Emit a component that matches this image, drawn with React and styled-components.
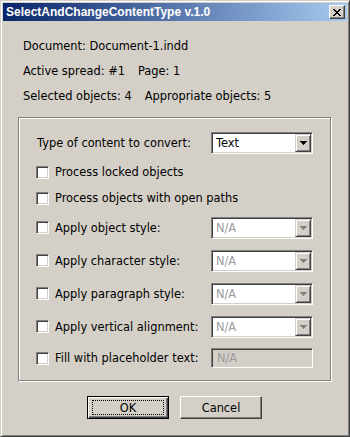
import React from 'react';
import styled, { createGlobalStyle, css } from 'styled-components';

const GlobalStyle = createGlobalStyle`
  html, body { margin: 0; padding: 0; background: #D4D0C8; }
  body {
    font-family: "DejaVu Sans", Verdana, sans-serif;
    font-size: 11.4px;
    color: #000;
  }
`;

const Window = styled.div`
  box-sizing: border-box;
  width: 350px;
  height: 437px;
  display: flex;
  flex-direction: column;
  background: #D4D0C8;
  border: 1px solid;
  border-color: #D4D0C8 #404040 #404040 #D4D0C8;
  box-shadow: inset 1px 1px #fff, inset -1px -1px #808080;
  padding: 2px;
`;

const TitleBar = styled.div`
  height: 18px;
  flex: none;
  display: flex;
  align-items: center;
  justify-content: space-between;
  padding: 0 2px 0 3px;
  background: linear-gradient(to right, #0A246A, #A6CAF0);
`;

const Title = styled.span`
  font-family: "Liberation Sans", Arial, sans-serif;
  font-weight: bold;
  font-size: 12px;
  line-height: 18px;
  color: #fff;
  white-space: nowrap;
`;

const CloseButton = styled.div`
  box-sizing: border-box;
  width: 16px;
  height: 14px;
  display: flex;
  align-items: center;
  justify-content: center;
  background: #D4D0C8;
  border: 1px solid;
  border-color: #fff #404040 #404040 #fff;
  box-shadow: inset -1px -1px #808080;
`;

const Body = styled.div`
  flex: 1;
  display: flex;
  flex-direction: column;
  padding: 18px 16px 0 15px;
`;

const Info = styled.div`
  display: flex;
  flex-direction: column;
  gap: 11px;
  padding-left: 5px;
`;

const InfoLine = styled.div`
  display: flex;
  gap: 13px;
  height: 14px;
  line-height: 14px;
  white-space: nowrap;
`;

const Group = styled.div`
  margin-top: 14px;
  border: 1px solid #808080;
  box-shadow: inset 1px 1px #fff, 1px 1px #fff;
  padding: 13px 17px 12px 17px;
  display: flex;
  flex-direction: column;
  gap: 10px;
`;

const Row = styled.div`
  display: flex;
  align-items: center;
  justify-content: space-between;
  height: ${p => p.$h}px;
`;

const PlainLabel = styled.span`
  padding-left: 1px;
  white-space: nowrap;
`;

const CheckLabel = styled.label`
  display: flex;
  align-items: center;
  gap: 6px;
  white-space: nowrap;
`;

const CheckBox = styled.span`
  box-sizing: border-box;
  width: 13px;
  height: 13px;
  flex: none;
  background: #fff;
  border: 1px solid;
  border-color: #808080 #fff #fff #808080;
  box-shadow: inset 1px 1px #404040, inset -1px -1px #D4D0C8;
`;

const sunken = css`
  box-sizing: border-box;
  border: 1px solid;
  border-color: #808080 #fff #fff #808080;
  box-shadow: inset 1px 1px #404040, inset -1px -1px #D4D0C8;
  padding: 1px;
`;

const Combo = styled.div`
  ${sunken}
  width: 102px;
  height: 22px;
  display: flex;
  background: #fff;
`;

const ComboText = styled.span`
  flex: 1;
  padding-left: 3px;
  line-height: 18px;
  color: ${p => (p.$disabled ? '#9a9a9a' : '#000')};
`;

const ComboButton = styled.span`
  box-sizing: border-box;
  width: 16px;
  height: 18px;
  flex: none;
  display: flex;
  align-items: center;
  justify-content: center;
  background: #D4D0C8;
  border: 1px solid;
  border-color: #D4D0C8 #404040 #404040 #D4D0C8;
  box-shadow: inset 1px 1px #fff, inset -1px -1px #808080;
`;

const TextField = styled.div`
  ${sunken}
  width: 102px;
  height: 20px;
  background: #D4D0C8;
  padding-left: 5px;
  line-height: 16px;
  color: #9a9a9a;
`;

const ButtonRow = styled.div`
  margin-top: 15px;
  display: flex;
  justify-content: center;
  gap: 11px;
`;

const Button = styled.button`
  position: relative;
  box-sizing: border-box;
  width: 82px;
  height: 23px;
  padding: 0;
  font-family: inherit;
  font-size: inherit;
  color: #000;
  background: #D4D0C8;
  border: 1px solid;
  border-color: #fff #404040 #404040 #fff;
  box-shadow: inset -1px -1px #808080;
  ${p =>
    p.$default &&
    css`
      border-color: #000;
      box-shadow: inset 1px 1px #fff, inset -1px -1px #404040, inset -2px -2px #808080;
      &::after {
        content: '';
        position: absolute;
        inset: 3px 4px 3px 4px;
        border: 1px dotted #000;
      }
    `}
`;

const CloseGlyph = () => (
  <svg width="8" height="7" viewBox="0 0 8 7" shapeRendering="crispEdges">
    <path
      fill="#000"
      d="M0 0h2v1H0zM6 0h2v1H6zM1 1h2v1H1zM5 1h2v1H5zM2 2h4v1H2zM3 3h2v1H3zM2 4h4v1H2zM1 5h2v1H1zM5 5h2v1H5zM0 6h2v1H0zM6 6h2v1H6z"
    />
  </svg>
);

const Arrow = ({ color }) => (
  <svg width="7" height="4" viewBox="0 0 7 4" shapeRendering="crispEdges">
    <path fill={color} d="M0 0h7v1H0zM1 1h5v1H1zM2 2h3v1H2zM3 3h1v1H3z" />
  </svg>
);

const Dropdown = ({ value, disabled }) => (
  <Combo>
    <ComboText $disabled={disabled}>{value}</ComboText>
    <ComboButton>
      <Arrow color={disabled ? '#808080' : '#000'} />
    </ComboButton>
  </Combo>
);

const Check = ({ children }) => (
  <CheckLabel>
    <CheckBox />
    <span>{children}</span>
  </CheckLabel>
);

export default function App() {
  return (
    <>
      <GlobalStyle />
      <Window>
        <TitleBar>
          <Title>SelectAndChangeContentType v.1.0</Title>
          <CloseButton>
            <CloseGlyph />
          </CloseButton>
        </TitleBar>
        <Body>
          <Info>
            <InfoLine>
              <span>Document: Document-1.indd</span>
            </InfoLine>
            <InfoLine>
              <span>Active spread: #1</span>
              <span>Page: 1</span>
            </InfoLine>
            <InfoLine>
              <span>Selected objects: 4</span>
              <span>Appropriate objects: 5</span>
            </InfoLine>
          </Info>
          <Group>
            <Row $h={23}>
              <PlainLabel>Type of content to convert:</PlainLabel>
              <Dropdown value="Text" />
            </Row>
            <Row $h={16}>
              <Check>Process locked objects</Check>
            </Row>
            <Row $h={16}>
              <Check>Process objects with open paths</Check>
            </Row>
            <Row $h={23}>
              <Check>Apply object style:</Check>
              <Dropdown value="N/A" disabled />
            </Row>
            <Row $h={23}>
              <Check>Apply character style:</Check>
              <Dropdown value="N/A" disabled />
            </Row>
            <Row $h={23}>
              <Check>Apply paragraph style:</Check>
              <Dropdown value="N/A" disabled />
            </Row>
            <Row $h={23}>
              <Check>Apply vertical alignment:</Check>
              <Dropdown value="N/A" disabled />
            </Row>
            <Row $h={20}>
              <Check>Fill with placeholder text:</Check>
              <TextField>N/A</TextField>
            </Row>
          </Group>
          <ButtonRow>
            <Button $default>OK</Button>
            <Button>Cancel</Button>
          </ButtonRow>
        </Body>
      </Window>
    </>
  );
}
